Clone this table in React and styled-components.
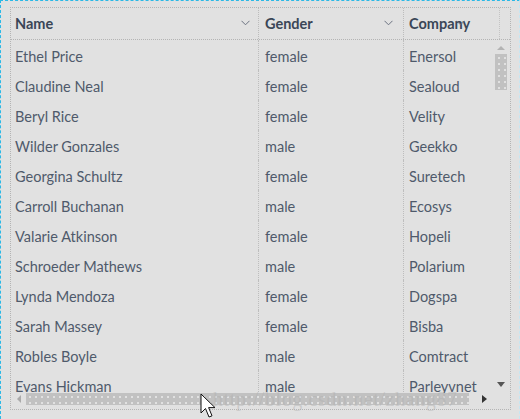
import React from "react";
import styled, { createGlobalStyle } from "styled-components";

const Global = createGlobalStyle`
  html, body { margin: 0; padding: 0; background: #e1e1e1; }
  body { font-family: Lato, "Open Sans", sans-serif; }
  * { box-sizing: border-box; }
`;

const rows = [
  ["Ethel Price", "female", "Enersol"],
  ["Claudine Neal", "female", "Sealoud"],
  ["Beryl Rice", "female", "Velity"],
  ["Wilder Gonzales", "male", "Geekko"],
  ["Georgina Schultz", "female", "Suretech"],
  ["Carroll Buchanan", "male", "Ecosys"],
  ["Valarie Atkinson", "female", "Hopeli"],
  ["Schroeder Mathews", "male", "Polarium"],
  ["Lynda Mendoza", "female", "Dogspa"],
  ["Sarah Massey", "female", "Bisba"],
  ["Robles Boyle", "male", "Comtract"],
  ["Evans Hickman", "male", "Parleyvnet"],
];

const cols = [
  { title: "Name", width: 248, pad: 4, chev: 8 },
  { title: "Gender", width: 145, pad: 6, chev: 10 },
  { title: "Company", width: 96, pad: 5, chev: 34 },
];

const Frame = styled.div`
  width: 520px;
  height: 419px;
  border-top: 1px dashed #2bb8e6;
  border-left: 1px dashed #2bb8e6;
  border-right: 1px dashed #c6e6f2;
  padding: 6px 9px 10px 9px;
  position: relative;
  overflow: hidden;
`;

const Grid = styled.div`
  width: 501px;
  height: 403px;
  border: 1px dotted #b4b4b4;
  display: flex;
  flex-direction: column;
  position: relative;
`;

const HeaderRow = styled.div`
  display: flex;
  height: 32px;
  border-bottom: 1px dotted #b4b4b4;
  flex: none;
`;

const HeaderCell = styled.div`
  flex: none;
  width: ${(p) => p.$w}px;
  padding-left: ${(p) => p.$pad}px;
  display: flex;
  align-items: center;
  position: relative;
  font-weight: 700;
  font-size: 14.5px;
  color: #3a4657;
  border-right: 1px dotted ${(p) => (p.$last ? "#c4c4c4" : "#bcbcbc")};
`;

const Chevron = styled.svg`
  position: absolute;
  z-index: 2;
  right: ${(p) => p.$r}px;
  top: 12px;
  width: 9px;
  height: 6px;
`;

const BodyArea = styled.div`
  flex: 1;
  display: flex;
  min-height: 0;
`;

const Rows = styled.div`
  flex: 1;
  overflow: hidden;
  display: flex;
  flex-direction: column;
`;

const Row = styled.div`
  display: flex;
  height: 30px;
  flex: none;
`;

const Cell = styled.div`
  flex: none;
  width: ${(p) => p.$w}px;
  padding-left: ${(p) => p.$pad}px;
  display: flex;
  align-items: center;
  padding-top: 2px;
  font-size: 14.5px;
  color: #4f5a6b;
  white-space: nowrap;
  border-right: 1px dotted ${(p) => (p.$last ? "transparent" : "#bdbdbd")};
`;

const dots = `
  background-color: #c1c1c1;
  background-image: radial-gradient(circle, rgba(255,255,255,0.85) 0.55px, transparent 0.95px);
  background-size: 6px 6px;
  background-position: 1px 1px;
`;

const VScroll = styled.div`
  flex: none;
  width: 13px;
  margin-right: 3px;
  display: flex;
  flex-direction: column;
  align-items: center;
  padding-top: 6px;
  padding-bottom: 22px;
`;

const VThumb = styled.div`
  width: 12px;
  height: 36px;
  margin-top: 4px;
  ${dots}
`;

const Spacer = styled.div`
  flex: 1;
`;

const Arrow = styled.div`
  width: 0;
  height: 0;
  border-style: solid;
  ${(p) =>
    p.$dir === "up"
      ? "border-width: 0 4px 4px 4px; border-color: transparent transparent #b3b3b3 transparent;"
      : p.$dir === "down"
      ? "border-width: 5px 4px 0 4px; border-color: #555 transparent transparent transparent;"
      : p.$dir === "left"
      ? "border-width: 4px 4px 4px 0; border-color: transparent #aaa transparent transparent;"
      : "border-width: 4px 0 4px 5px; border-color: transparent transparent transparent #333;"}
`;

const HScroll = styled.div`
  position: absolute;
  left: 0;
  right: 0;
  top: 385px;
  height: 12px;
  display: flex;
  align-items: center;
  padding-left: 6px;
`;

const HThumb = styled.div`
  width: 443px;
  height: 12px;
  margin-left: 5px;
  margin-right: 13px;
  ${dots}
`;

const Watermark = styled.div`
  position: absolute;
  left: 212px;
  top: 388px;
  font-family: "Liberation Serif", serif;
  font-size: 20px;
  line-height: 20px;
  color: rgba(175, 175, 175, 0.45);
  letter-spacing: 0.6px;
  white-space: nowrap;
  pointer-events: none;
`;

const Cursor = styled.svg`
  position: absolute;
  left: 199px;
  top: 392px;
  width: 17px;
  height: 27px;
`;

function ChevronIcon({ r }) {
  return (
    <Chevron $r={r} viewBox="0 0 9 6">
      <path d="M0.5 0.8 L4.5 4.8 L8.5 0.8" fill="none" stroke="#6b7280" strokeWidth="1" />
    </Chevron>
  );
}

export default function App() {
  return (
    <>
      <Global />
      <Frame>
        <Grid>
          <HeaderRow>
            {cols.map((c, i) => (
              <HeaderCell key={c.title} $w={c.width} $pad={c.pad} $last={i === cols.length - 1}>
                {c.title}
                <ChevronIcon r={c.chev} />
              </HeaderCell>
            ))}
          </HeaderRow>
          <BodyArea>
            <Rows>
              {rows.map((r) => (
                <Row key={r[0]}>
                  {r.map((v, i) => (
                    <Cell key={i} $w={cols[i].width} $pad={cols[i].pad} $last={i === 2}>
                      {v}
                    </Cell>
                  ))}
                </Row>
              ))}
            </Rows>
            <VScroll>
              <Arrow $dir="up" />
              <VThumb />
              <Spacer />
              <Arrow $dir="down" />
            </VScroll>
          </BodyArea>
          <HScroll>
            <Arrow $dir="left" />
            <HThumb />
            <Arrow $dir="right" />
          </HScroll>
        </Grid>
        <Watermark>http://blog.csdn.net/zhang87</Watermark>
        <Cursor viewBox="0 0 17 27">
          <path
            d="M1 1 L1 20 L5.5 15.5 L9 24 L12 22.8 L8.6 14.6 L15 14.6 Z"
            fill="#fff"
            stroke="#111"
            strokeWidth="1"
            strokeLinejoin="miter"
          />
        </Cursor>
      </Frame>
    </>
  );
}
